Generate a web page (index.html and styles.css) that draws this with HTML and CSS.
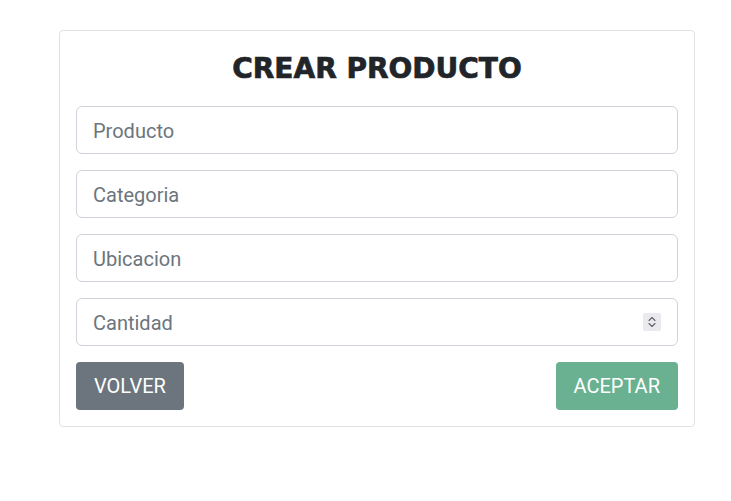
FILE: index.html
```html
<!DOCTYPE html>
<html lang="es">
<head>
<meta charset="utf-8">
<title>Crear producto</title>
<link rel="stylesheet" href="styles.css">
</head>
<body>
<div class="card">
  <h1 class="title">CREAR PRODUCTO</h1>
  <form class="form">
    <input class="field" type="text" placeholder="Producto">
    <input class="field" type="text" placeholder="Categoria">
    <input class="field" type="text" placeholder="Ubicacion">
    <div class="number-wrap">
      <input class="field" type="text" placeholder="Cantidad">
      <span class="spinner">
        <svg width="18" height="18" viewBox="0 0 18 18">
          <path d="M6 7.5 L9 4.5 L12 7.5" fill="none" stroke="#5f6368" stroke-width="1.1" stroke-linecap="round" stroke-linejoin="round"/>
          <path d="M6 10.5 L9 13.5 L12 10.5" fill="none" stroke="#5f6368" stroke-width="1.1" stroke-linecap="round" stroke-linejoin="round"/>
        </svg>
      </span>
    </div>
    <div class="actions">
      <button type="button" class="btn btn-back">VOLVER</button>
      <button type="button" class="btn btn-ok">ACEPTAR</button>
    </div>
  </form>
</div>
</body>
</html>
```

FILE: styles.css
```css
html, body {
  margin: 0;
  padding: 0;
  background: #ffffff;
}
body {
  font-family: Roboto, "Liberation Sans", sans-serif;
  color: #212529;
}
.card {
  margin: 30px 0 0 59px;
  width: 636px;
  box-sizing: border-box;
  border: 1px solid #dfe2e6;
  border-radius: 4px;
  padding: 16px;
}
.title {
  margin: 0 0 16px;
  text-align: center;
  font-family: "DejaVu Sans", sans-serif;
  font-weight: 700;
  font-size: 28px;
  line-height: 43px;
  color: #212529;
  -webkit-text-stroke: 0.7px #212529;
}
.form {
  display: flex;
  flex-direction: column;
  gap: 16px;
}
.field {
  display: block;
  width: 100%;
  box-sizing: border-box;
  height: 48px;
  padding: 9px 16px 7px;
  font-family: inherit;
  font-size: 20px;
  line-height: 30px;
  color: #212529;
  border: 1px solid #ced4da;
  border-radius: 6px;
  background: #fff;
  outline: none;
}
.field::placeholder {
  color: #6c757d;
}
.number-wrap {
  position: relative;
}
.spinner {
  position: absolute;
  right: 17px;
  top: 15px;
  width: 18px;
  height: 18px;
  background: #e9e9ee;
  border-radius: 2px;
  display: flex;
}
.actions {
  display: flex;
  justify-content: space-between;
}
.btn {
  height: 48px;
  padding: 8px 17px;
  font-family: inherit;
  font-size: 20px;
  font-weight: 400;
  line-height: 30px;
  border: 1px solid transparent;
  border-radius: 4px;
  color: #fff;
}
.btn-back {
  background: #6c757d;
}
.btn-ok {
  background: #69b190;
}
```
